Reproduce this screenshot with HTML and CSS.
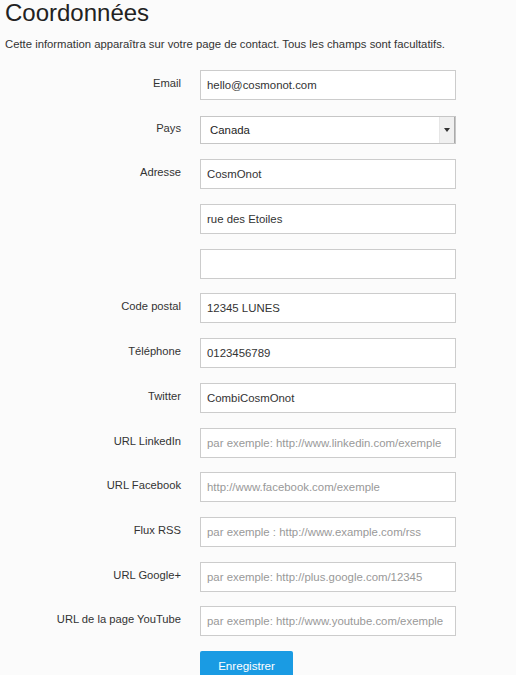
FILE: index.html
```html
<!DOCTYPE html>
<html lang="fr">
<head>
<meta charset="utf-8">
<title>Coordonnées</title>
<link rel="stylesheet" href="styles.css">
</head>
<body>
<h1 class="title">Coordonnées</h1>
<p class="intro">Cette information apparaîtra sur votre page de contact. Tous les champs sont facultatifs.</p>
<form class="form">
  <div class="row"><label class="label">Email</label><input class="field" type="text" value="hello@cosmonot.com"></div>
  <div class="row"><label class="label">Pays</label>
    <div class="select"><span class="select-value">Canada</span><span class="select-btn"><svg width="6" height="4" viewBox="0 0 6 4"><path d="M0 0h6L3 4z" fill="#333"/></svg></span></div>
  </div>
  <div class="row"><label class="label">Adresse</label><input class="field" type="text" value="CosmOnot"></div>
  <div class="row"><span class="label"></span><input class="field" type="text" value="rue des Etoiles"></div>
  <div class="row"><span class="label"></span><input class="field" type="text" value=""></div>
  <div class="row"><label class="label">Code postal</label><input class="field" type="text" value="12345 LUNES"></div>
  <div class="row"><label class="label">Téléphone</label><input class="field" type="text" value="0123456789"></div>
  <div class="row"><label class="label">Twitter</label><input class="field" type="text" value="CombiCosmOnot"></div>
  <div class="row"><label class="label">URL LinkedIn</label><input class="field" type="text" placeholder="par exemple: http://www.linkedin.com/exemple"></div>
  <div class="row"><label class="label">URL Facebook</label><input class="field" type="text" placeholder="http://www.facebook.com/exemple"></div>
  <div class="row"><label class="label">Flux RSS</label><input class="field" type="text" placeholder="par exemple : http://www.example.com/rss"></div>
  <div class="row"><label class="label">URL Google+</label><input class="field" type="text" placeholder="par exemple: http://plus.google.com/12345"></div>
  <div class="row"><label class="label">URL de la page YouTube</label><input class="field" type="text" placeholder="par exemple: http://www.youtube.com/exemple"></div>
  <div class="row"><span class="label"></span><button class="btn" type="button">Enregistrer</button></div>
</form>
</body>
</html>
```
FILE: styles.css
```css
html, body {
  margin: 0;
  padding: 0;
  background: #fbfbfb;
}
body {
  padding: 0 5px;
  font-family: "Liberation Sans", Arial, sans-serif;
  color: #333;
}
.title {
  margin: -2px 0 0;
  font-size: 24px;
  line-height: 30px;
  font-weight: normal;
  color: #222;
}
.intro {
  margin: 8px 0 0;
  font-size: 11.3px;
  line-height: 16px;
  color: #333;
}
.form {
  margin-top: 18px;
  display: flex;
  flex-direction: column;
  gap: 14.7px;
}
.row {
  display: flex;
  align-items: center;
  gap: 19px;
}
.label {
  width: 176px;
  flex: none;
  text-align: right;
  font-size: 11.2px;
  color: #333;
  margin-top: -4px;
}
.field {
  box-sizing: border-box;
  width: 256px;
  height: 30px;
  margin: 0;
  padding: 0 4px 0 6px;
  border: 1px solid #ccc;
  background: #fff;
  font-family: "Liberation Sans", Arial, sans-serif;
  font-size: 11.4px;
  color: #333;
  outline: none;
}
.field::placeholder {
  color: #999;
}
.select {
  box-sizing: border-box;
  width: 256px;
  height: 28px;
  margin: 1px 0;
  border: 1px solid #c6c6c6;
  background: #fff;
  display: flex;
  align-items: center;
}
.select-value {
  flex: 1;
  padding-left: 9px;
  font-size: 11.4px;
  color: #222;
}
.select-btn {
  align-self: stretch;
  width: 14px;
  background: #f0f0f0;
  border-left: 1px solid #e6e6e6;
  border-right: 1px solid #aaa;
  display: flex;
  align-items: center;
  justify-content: center;
}
.btn {
  width: 93px;
  height: 30px;
  border: 0;
  border-radius: 2px;
  background: #1a9be3;
  color: #fff;
  font-family: "Liberation Sans", Arial, sans-serif;
  font-size: 11.6px;
  padding: 0;
}
```
